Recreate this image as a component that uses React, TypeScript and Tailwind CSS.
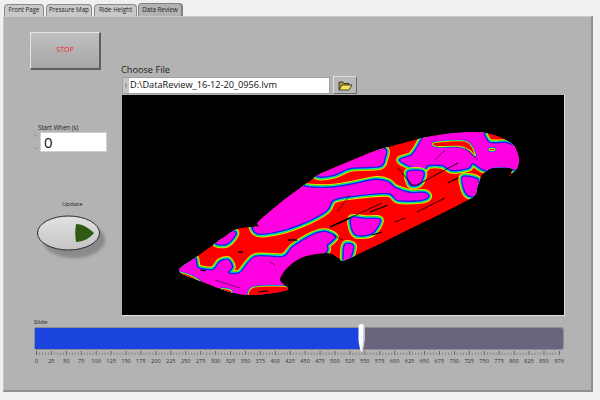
import { ChevronUp, ChevronDown } from "lucide-react";

const FONT = "font-['Open_Sans','Noto_Sans',sans-serif]";

const TABS = [
  { label: "Front Page", width: "w-[40px]" },
  { label: "Pressure Map", width: "w-[46px]" },
  { label: "Ride Height", width: "w-[43px]" },
];

// catmull-rom through a closed list of points
function smooth(raw: string) {
  const n = raw.trim().split(/\s+/).map(Number);
  const pts: [number, number][] = [];
  for (let i = 0; i < n.length; i += 2) pts.push([n[i], n[i + 1]]);
  const at = (i: number) => pts[(i + pts.length) % pts.length];
  let d = `M${pts[0][0]} ${pts[0][1]}`;
  pts.forEach((p, i) => {
    const a = at(i - 1);
    const b = at(i + 1);
    const c = at(i + 2);
    const c1x = p[0] + (b[0] - a[0]) / 7;
    const c1y = p[1] + (b[1] - a[1]) / 7;
    const c2x = b[0] - (c[0] - p[0]) / 7;
    const c2y = b[1] - (c[1] - p[1]) / 7;
    d += ` C${c1x.toFixed(1)} ${c1y.toFixed(1)} ${c2x.toFixed(1)} ${c2y.toFixed(1)} ${b[0]} ${b[1]}`;
  });
  return d + " Z";
}

const SHAPE = smooth(
  "179 271 195 258 217 242 237 229 252 227 259 226 258 222 280 203 303 186 320 174 350 161 378 150 418 139 445 134 472 132 495 135 513 145 519 158 517 168 508 177 513 169 505 168 492 168 482 175 477 188 473 197 445 212 412 228 378 245 345 260 338 258 327 253 303 257 287 268 280 280 287 290 253 295 230 292 203 282"
);

const MAGENTA = [
  // wing
  "255 215 300 175 303 186 327 188 350 185 375 180 388 182 395 188 410 193 425 193 428 197 420 200 398 200 388 193 350 196 333 200 327 210 310 220 283 230 257 233",
  // top strip
  "310 165 317 176 333 175 350 168 365 167 380 166 384 160 382 148 330 150",
  // nose
  "422 135 422 139 412 155 400 160 413 167 425 168 428 165 442 165 452 170 468 168 473 163 485 170 502 167 525 170 525 140 515 145 505 143 490 143 484 135 480 125 420 125",
  // tail
  "195 258 198 268 213 270 220 262 228 260 232 267 228 273 240 273 255 257 283 257 293 247 313 235 325 232 335 237 327 245 327 250 320 262 290 310 200 300 170 280 188 262",
  "216 243 226 244 233 238 235 232 222 232",
  "352 218 365 219 380 220 372 233 357 235 352 228",
  "345 245 353 246 350 258 344 262",
  "408 172 423 172 420 183 411 185",
  "463 177 478 180 476 195 468 195 464 188",
];

const RED_ISLANDS = [
  "253 288 285 287 288 292 270 300 250 300",
  "435 143 466 142 475 155 470 150 460 146 437 146",
  "490 149 494 149 494 150 490 150",
  "178 273 190 276 200 282 192 284",
  "222 289 231 291 230 295 222 293",
];

const CRACKS: [string, number][] = [
  ["M330 227 L350 218", 1.6],
  ["M345 220 L382 203", 0.8],
  ["M337 212 L350 195", 0.6],
  ["M398 168 L412 185 L417 185 L458 163", 0.9],
  ["M417 212 L445 198", 0.9],
  ["M448 183 L458 178", 1.2],
  ["M372 235 L382 232", 1.2],
  ["M370 212 L388 205", 1.2],
  ["M288 240 L297 240", 1.6],
  ["M238 252 L243 252", 1.4],
  ["M333 235 L343 240", 0.6],
  ["M200 270 L206 271", 1],
  ["M258 292 L268 291", 1],
  ["M270 262 L275 265", 0.5],
  ["M215 280 L240 288", 0.5],
  ["M435 160 L445 150", 0.5],
  ["M465 148 L478 160", 0.5],
  ["M395 222 L405 218", 0.9],
];

function Contour({ d, stops }: { d: string; stops: [string, number][] }) {
  return (
    <g strokeLinejoin="round">
      {stops.map(([color, width]) => (
        <path key={color} d={d} fill="none" stroke={color} strokeWidth={width} />
      ))}
    </g>
  );
}

function HeatMap() {
  return (
    <svg viewBox="122 95 442 220" className="block h-full w-full">
      <defs>
        <clipPath id="car">
          <path d={SHAPE} />
        </clipPath>
        <filter id="soft" x="-5%" y="-5%" width="110%" height="110%">
          <feGaussianBlur stdDeviation="0.45" />
        </filter>
      </defs>
      <g filter="url(#soft)">
        <g clipPath="url(#car)">
          <path d={SHAPE} fill="#ff0000" />
          {MAGENTA.map((raw) => {
            const d = smooth(raw);
            return (
              <g key={raw}>
                <Contour
                  d={d}
                  stops={[
                    ["#ffe600", 7.6],
                    ["#33e000", 6],
                    ["#00e0e0", 4.4],
                    ["#1a20e8", 2.8],
                  ]}
                />
                <path d={d} fill="#ff00e0" />
              </g>
            );
          })}
          {RED_ISLANDS.map((raw) => {
            const d = smooth(raw);
            return (
              <g key={raw}>
                <Contour
                  d={d}
                  stops={[
                    ["#1a20e8", 3.4],
                    ["#00e0e0", 2.6],
                    ["#33e000", 1.8],
                    ["#ffe600", 1.1],
                  ]}
                />
                <path d={d} fill="#ff0000" />
              </g>
            );
          })}
          {CRACKS.map(([d, width]) => (
            <path key={d} d={d} stroke="#000" strokeWidth={width} fill="none" />
          ))}
        </g>
      </g>
    </svg>
  );
}

function FolderIcon() {
  return (
    <svg width="15" height="11" viewBox="0 0 15 11">
      <path d="M1 2 L5 2 L6 3.5 L11 3.5 L11 5 L1 10 Z" fill="#a89a2a" stroke="#222" strokeWidth="0.8" />
      <path d="M1.2 10 L4 5 L14 5 L11 10 Z" fill="#f3e35a" stroke="#222" strokeWidth="0.8" />
    </svg>
  );
}

function UpdateButton() {
  return (
    <svg width="72" height="46" viewBox="0 0 72 46" className="block">
      <defs>
        <linearGradient id="capBody" x1="0" y1="0" x2="0" y2="1">
          <stop offset="0" stopColor="#e2e2e2" />
          <stop offset="1" stopColor="#c4c4c4" />
        </linearGradient>
        <filter id="capShadow">
          <feGaussianBlur stdDeviation="1.5" />
        </filter>
      </defs>
      <ellipse cx="37" cy="25" rx="31" ry="18" fill="#8a8a8a" filter="url(#capShadow)" />
      <ellipse cx="31.5" cy="18" rx="31" ry="17" fill="url(#capBody)" stroke="#2c2c2c" strokeWidth="1" />
      <path d="M39 9 C46 9 53 14 57 18 C53 23 46 27 39 27 C38 21 38 15 39 9 Z" fill="#2e5b14" />
    </svg>
  );
}

function SliderThumb() {
  return (
    <svg width="7" height="29" viewBox="0 0 7 29" className="absolute -top-[4px] left-[323px]">
      <path d="M0.5 3 Q0.5 0 3.5 0 Q6.5 0 6.5 3 L6.5 16 Q5.5 25 3.5 28.5 Q1.5 25 0.5 16 Z" fill="#ffffff" />
      <path d="M5 1 Q6.5 1.5 6.5 3 L6.5 16 Q5.5 25 3.5 28.5 Q5 20 5 14 Z" fill="#cfcfcf" />
    </svg>
  );
}

function SliderScale() {
  const labels = Array.from({ length: 35 }, (_, i) => i * 25);
  const pxPerUnit = 523 / 876;
  const minor = Array.from({ length: 175 }, (_, i) => i * 5);
  return (
    <div className="ml-[32px] mt-px w-[526px]">
      <svg width="526" height="5" viewBox="0 0 526 5" className="block">
        {minor.map((v) => (
          <line
            key={v}
            x1={v * pxPerUnit + 0.5}
            x2={v * pxPerUnit + 0.5}
            y1={v % 25 === 0 ? 0 : 1.5}
            y2="4"
            stroke={v % 25 === 0 ? "#444" : "#777"}
            strokeWidth="0.7"
          />
        ))}
        <line x1="523.5" x2="523.5" y1="0" y2="4" stroke="#444" strokeWidth="0.7" />
      </svg>
      <div className="-ml-[7px] mt-px flex text-[5.6px] leading-[8px] text-[#333]">
        {labels.map((v) => (
          <span key={v} className="w-[14.925px] shrink-0 text-center">
            {v}
          </span>
        ))}
        <span className="ml-[0.6px] w-[14.925px] shrink-0 text-center">876</span>
      </div>
    </div>
  );
}

export default function App() {
  return (
    <div className={`h-[400px] w-[600px] overflow-hidden bg-[#f0f0f0] pl-[3px] pt-[3px] ${FONT}`}>
      <div className="flex h-[13px] items-end pl-px text-[6.2px] leading-none text-[#222]">
        {TABS.map((tab) => (
          <div
            key={tab.label}
            className={`${tab.width} mr-[2px] flex h-[12px] items-center justify-center rounded-t-sm border border-b-0 border-[#8a8a8a] bg-[#c9c9c9]`}
          >
            {tab.label}
          </div>
        ))}
        <div className="-ml-[1px] flex h-[13px] w-[45px] items-center justify-center rounded-t-sm border border-b-0 border-r-2 border-[#808080] bg-[#b3b3b3]">
          Data Review
        </div>
      </div>

      <div className="h-[376px] w-[590px] border border-r-2 border-b-2 border-[#8f8f8f] border-l-[#c8c8c8] border-t-[#c8c8c8] bg-[#b3b3b3]">
        <div className="flex">
          <div className="w-[118px]">
            <div className="ml-[26px] mt-[15px] flex h-[38px] w-[71px] items-center justify-center border border-[#e4e4e4] border-b-2 border-r-2 border-b-[#5e5e5e] border-r-[#5e5e5e] bg-gradient-to-b from-[#c0c0c0] to-[#a6a6a6] text-[7px] text-[#f01824]">
              STOP
            </div>

            <div className="ml-[34px] mt-[53px] text-[6.2px] leading-[9px] text-[#222]">Start When (s)</div>
            <div className="ml-[28px] flex items-center">
              <div className="flex h-[20px] w-[7px] flex-col justify-between text-[#777]">
                <ChevronUp size={7} strokeWidth={2} />
                <ChevronDown size={7} strokeWidth={2} />
              </div>
              <div className="ml-px h-[20px] w-[67px] border border-[#cfcfcf] bg-white pl-[3px] text-[15px] leading-[18px] text-[#111]">
                0
              </div>
            </div>

            <div className="ml-[58px] mt-[48px] text-[6px] leading-[9px] text-[#222]">Update</div>
            <div className="ml-[33px] mt-[6px]">
              <UpdateButton />
            </div>
          </div>

          <div className="w-[444px]">
            <div className="-ml-px mt-[46px] text-[9.2px] leading-[13px] text-[#222]">Choose File</div>
            <div className="flex h-[18px] items-center">
              <div className="flex h-[17px] w-[208px] items-center border border-[#a0a0a0] bg-white text-[9.2px] text-[#111]">
                <span className="h-full w-[6px] shrink-0 bg-[#c4c4c4] text-center text-[6px] leading-[15px]">↕</span>
                <span className="ml-px">D:\DataReview_16-12-20_0956.lvm</span>
              </div>
              <div className="ml-[3px] flex h-[18px] w-[24px] items-center justify-center border border-[#dedede] border-b-[#6a6a6a] border-r-[#6a6a6a] bg-[#b9b9b9]">
                <FolderIcon />
              </div>
            </div>
            <div className="mt-px h-[221px] w-[443px] border-b border-r border-[#e0e0e0] bg-black">
              <HeatMap />
            </div>
          </div>
        </div>

        <div className="ml-[30px] mt-[2px] text-[6px] leading-[8px] text-[#222]">Slide</div>
        <div className="relative ml-[30px] mt-px flex h-[23px] w-[530px] rounded-[2px] border border-[#8d8d99]">
          <div className="w-[326px] bg-[#1a44dd]" />
          <div className="flex-1 rounded-r-[2px] bg-[#68667f]" />
          <SliderThumb />
        </div>
        <SliderScale />
      </div>
    </div>
  );
}
